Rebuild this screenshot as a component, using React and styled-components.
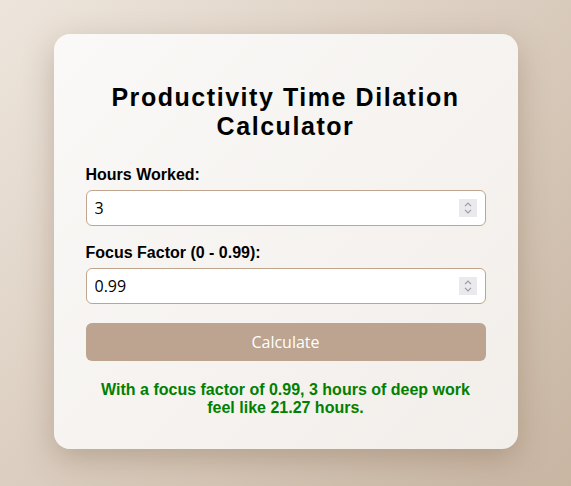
import React, { useState } from "react";
import styled, { createGlobalStyle } from "styled-components";

const GlobalStyle = createGlobalStyle`
  html, body {
    margin: 0;
    padding: 0;
  }
  body {
    font-family: "Liberation Sans", Arial, sans-serif;
    background: linear-gradient(135deg, #ede5dc 0%, #dccfc1 45%, #c8b5a2 100%);
    min-height: 100vh;
  }
`;

const Page = styled.div`
  min-height: 486px;
  display: flex;
  align-items: center;
  justify-content: center;
  box-sizing: border-box;
  padding-bottom: 4px;
`;

const Card = styled.div`
  width: 464px;
  box-sizing: border-box;
  padding: 32px 32px 32px;
  border-radius: 16px;
  background: linear-gradient(135deg, #faf9f7 0%, #f5f2ef 60%, #f2eeea 100%);
  box-shadow: 0 10px 30px rgba(120, 95, 70, 0.35);
`;

const Title = styled.h1`
  font-family: "Liberation Sans", Arial, sans-serif;
  font-size: 25px;
  line-height: 29px;
  font-weight: bold;
  letter-spacing: 1.55px;
  text-align: center;
  color: #000;
  margin: 17px 0 25px;
`;

const Field = styled.div`
  display: flex;
  flex-direction: column;
  margin-bottom: ${(p) => p.gap || 20}px;
`;

const Label = styled.label`
  font-size: 16px;
  font-weight: bold;
  line-height: 18px;
  color: #000;
  margin-bottom: 6px;
`;

const InputWrap = styled.div`
  position: relative;
  display: flex;
`;

const Input = styled.input`
  flex: 1;
  height: 36px;
  box-sizing: border-box;
  border: 1px solid #bfa58e;
  border-radius: 6px;
  background: #fff;
  padding: 0 36px 0 8px;
  font-family: "Open Sans", "Noto Sans", sans-serif;
  font-size: 16px;
  color: #000;
  outline: none;
  -moz-appearance: textfield;

  &::-webkit-inner-spin-button,
  &::-webkit-outer-spin-button {
    -webkit-appearance: none;
    margin: 0;
  }
`;

const Spinner = styled.div`
  position: absolute;
  right: 9px;
  top: 50%;
  transform: translateY(-50%);
  width: 18px;
  height: 18px;
  background: #e9e9ee;
  display: flex;
  flex-direction: column;
  cursor: default;
`;

const SpinHalf = styled.span`
  flex: 1;
  display: flex;
  align-items: ${(p) => (p.up ? "flex-end" : "flex-start")};
  justify-content: center;
  padding: ${(p) => (p.up ? "0 0 1px" : "1px 0 0")};
`;

const Chevron = ({ up }) => (
  <svg width="8" height="5" viewBox="0 0 8 5">
    <path
      d={up ? "M1 4.2 L4 1.2 L7 4.2" : "M1 0.8 L4 3.8 L7 0.8"}
      fill="none"
      stroke="#9a9aa2"
      strokeWidth="1.2"
    />
  </svg>
);

const Button = styled.button`
  width: 100%;
  height: 38px;
  border: 0;
  border-radius: 6px;
  background: #bca490;
  color: #fff;
  font-family: "Open Sans", "Noto Sans", sans-serif;
  font-size: 16px;
  cursor: pointer;
`;

const Result = styled.p`
  margin: 20px 0 0;
  text-align: center;
  color: #008000;
  font-weight: bold;
  font-size: 16px;
  line-height: 18px;
  padding: 0 10px;
`;

const NumberField = ({ id, value, step, onChange }) => {
  const bump = (dir) => {
    const n = parseFloat(value) || 0;
    const next = +(n + dir * step).toFixed(2);
    onChange(String(next));
  };
  return (
    <InputWrap>
      <Input
        id={id}
        type="number"
        step={step}
        value={value}
        onChange={(e) => onChange(e.target.value)}
      />
      <Spinner>
        <SpinHalf up onClick={() => bump(1)}>
          <Chevron up />
        </SpinHalf>
        <SpinHalf onClick={() => bump(-1)}>
          <Chevron />
        </SpinHalf>
      </Spinner>
    </InputWrap>
  );
};

export default function App() {
  const [hours, setHours] = useState("3");
  const [focus, setFocus] = useState("0.99");
  const [result, setResult] = useState(
    "With a focus factor of 0.99, 3 hours of deep work feel like 21.27 hours."
  );

  const calculate = () => {
    const h = parseFloat(hours);
    const f = parseFloat(focus);
    if (isNaN(h) || isNaN(f) || f < 0 || f >= 1) return;
    const felt = h / Math.sqrt(1 - f * f);
    setResult(
      `With a focus factor of ${f}, ${h} hours of deep work feel like ${felt.toFixed(2)} hours.`
    );
  };

  return (
    <>
      <GlobalStyle />
      <Page>
        <Card>
          <Title>Productivity Time Dilation Calculator</Title>
          <Field gap={18}>
            <Label htmlFor="hours">Hours Worked:</Label>
            <NumberField id="hours" value={hours} step={1} onChange={setHours} />
          </Field>
          <Field gap={19}>
            <Label htmlFor="focus">Focus Factor (0 - 0.99):</Label>
            <NumberField id="focus" value={focus} step={0.01} onChange={setFocus} />
          </Field>
          <Button type="button" onClick={calculate}>
            Calculate
          </Button>
          <Result>{result}</Result>
        </Card>
      </Page>
    </>
  );
}
